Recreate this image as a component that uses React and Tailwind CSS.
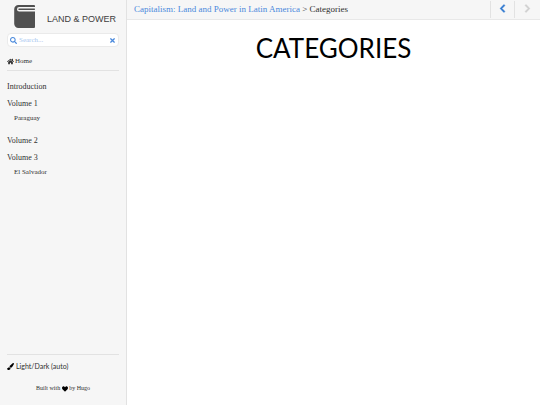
import React, { useState } from "react";
import {
  FaSearch,
  FaTimes,
  FaHome,
  FaPaintBrush,
  FaHeart,
  FaChevronLeft,
  FaChevronRight,
} from "react-icons/fa";

const menu = [
  { title: "Introduction", children: [] },
  { title: "Volume 1", children: ["Paraguay"] },
  { title: "Volume 2", children: [] },
  { title: "Volume 3", children: ["El Salvador"] },
];

const BookLogo = () => (
  <svg viewBox="0 0 21 23" className="h-[23px] w-[21px] shrink-0" aria-hidden="true">
    <path
      fill="#505050"
      d="M4.4 0H20a1 1 0 0 1 1 1v1H5.200a2.200 2.200 0 0 0 0 4.400H21V22a1 1 0 0 1-1 1H4.400A4.200 4.200 0 0 1 .2 18.800V4.200A4.200 4.200 0 0 1 4.400 0Z"
    />
    <path d="M5 4.200h15.300" stroke="#505050" strokeWidth="1.500" strokeLinecap="round" />
  </svg>
);

const Sidebar = () => {
  const [query, setQuery] = useState("");

  return (
    <aside className="flex w-[127px] shrink-0 flex-col border-r border-[#e2e2e2] bg-[#f6f6f6] px-[7px]">
      <a
        href="/"
        className="flex items-start gap-3 pt-[5px] pl-[7px] font-['Liberation_Sans',sans-serif] text-[9px] leading-7 whitespace-nowrap text-[#404040]"
      >
        <BookLogo />
        <span>LAND &amp; POWER</span>
      </a>

      <form
        onSubmit={(e) => e.preventDefault()}
        className="flex h-[14px] items-center gap-[2px] rounded-sm border border-[#eaeaea] bg-white px-[2px] text-[#4a89dc]"
      >
        <label htmlFor="search" aria-label="Search">
          <FaSearch className="size-[7px]" />
        </label>
        <input
          id="search"
          type="text"
          value={query}
          onChange={(e) => setQuery(e.target.value)}
          placeholder="Search..."
          className="min-w-0 flex-1 text-[7px] leading-3 outline-none placeholder:text-[#a9c8f0]"
        />
        <button type="button" aria-label="Clear search" onClick={() => setQuery("")}>
          <FaTimes className="size-[7px]" />
        </button>
      </form>

      <a
        href="/"
        className="mt-2 flex items-center gap-px border-b border-[#e2e2e2] pb-[3px] text-[7px] leading-3"
      >
        <FaHome className="size-[7px]" />
        Home
      </a>

      <nav className="mt-[7px]">
        <ul>
          {menu.map((item) => (
            <li key={item.title}>
              <a href="#" className="block text-[8px] leading-[17px]">
                {item.title}
              </a>
              {item.children.length > 0 && (
                <ul className="pb-2 pl-[7px]">
                  {item.children.map((child) => (
                    <li key={child}>
                      <a href="#" className="block text-[7px] leading-3">
                        {child}
                      </a>
                    </li>
                  ))}
                </ul>
              )}
            </li>
          ))}
        </ul>
      </nav>

      <footer className="mt-auto border-t border-[#e2e2e2] pt-[5px] pb-[11px]">
        <button
          type="button"
          className="flex items-center gap-[2px] font-[Lato,sans-serif] text-[7px] leading-3"
        >
          <FaPaintBrush className="size-[7px] text-black" />
          Light/Dark (auto)
        </button>
        <p className="mt-[10px] text-center text-[6px] leading-3">
          Built with <FaHeart className="inline size-[6px] text-black" /> by{" "}
          <a href="https://gohugo.io/">Hugo</a>
        </p>
      </footer>
    </aside>
  );
};

const Topbar = () => (
  <header className="flex h-5 items-stretch border-b border-[#e8e8e8] bg-[#f6f6f6]">
    <p className="flex-1 truncate pl-[7px] text-[9px] leading-[18px]">
      <a href="/" className="text-[#4a89dc]">
        Capitalism: Land and Power in Latin America
      </a>{" "}
      &gt; Categories
    </p>
    <a
      href="#"
      aria-label="Previous page"
      className="my-px flex w-[25px] items-center justify-center border-x border-[#e2e2e2] pb-[2px] text-[#2f78d0]"
    >
      <FaChevronLeft className="size-[9px]" strokeWidth="30" />
    </a>
    <button
      type="button"
      disabled
      aria-label="Next page"
      className="flex w-[25px] items-center justify-center pb-[2px] text-[#cfcfcf]"
    >
      <FaChevronRight className="size-[9px]" strokeWidth="30" />
    </button>
  </header>
);

const App = () => {
  return (
    <div className="flex min-h-screen bg-white font-['Liberation_Serif',serif] text-[#303030]">
      <Sidebar />
      <div className="min-w-0 flex-1">
        <Topbar />
        <main className="px-4 pt-3">
          <h1 className="text-center font-[Lato,sans-serif] text-[26px] leading-8 text-black">
            CATEGORIES
          </h1>
        </main>
      </div>
    </div>
  );
};

export default App;
